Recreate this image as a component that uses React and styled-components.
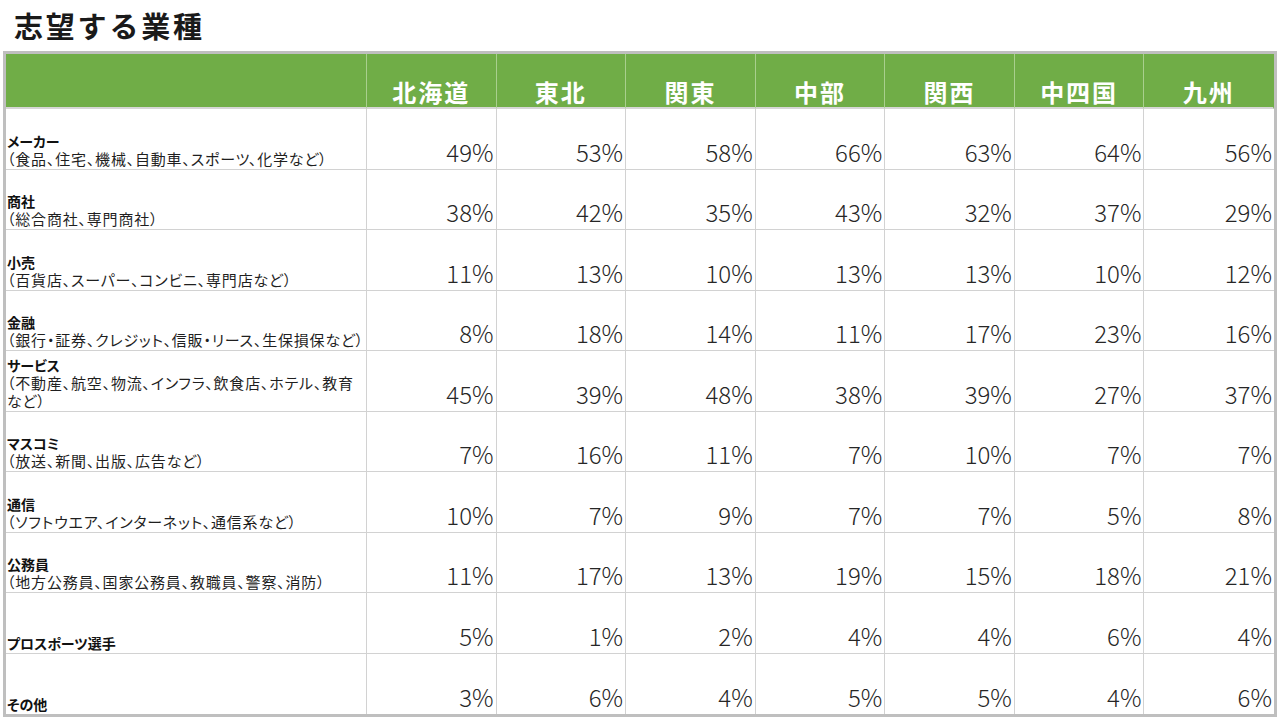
import React from "react";
import styled, { createGlobalStyle } from "styled-components";

const GlobalStyle = createGlobalStyle`
  html, body { margin: 0; padding: 0; background: #ffffff; }
  body {
    font-family: "Noto Sans CJK JP", "Noto Sans", sans-serif;
    color: #262626;
  }
`;

const Page = styled.div`
  width: 1280px;
  height: 720px;
  overflow: hidden;
  background: #ffffff;
`;

const Title = styled.h1`
  margin: 0;
  height: 51px;
  box-sizing: border-box;
  padding: 5px 0 0 14px;
  font-size: 29px;
  font-weight: 700;
  letter-spacing: 2.8px;
  line-height: 40px;
  color: #1a1a1a;
`;

const Table = styled.div`
  margin-left: 3px;
  width: 1274px;
  box-sizing: border-box;
  border: 3px solid #bfbfbf;
  display: grid;
  grid-template-columns: 361px repeat(7, 1fr);
  grid-template-rows: 55px repeat(10, 60.5px);
`;

const HeadCell = styled.div`
  background: #70ad47;
  color: #ffffff;
  font-weight: 700;
  font-size: 24px;
  letter-spacing: 2px;
  display: flex;
  align-items: flex-end;
  justify-content: center;
  padding-bottom: 3px;
  line-height: 24px;
  box-sizing: border-box;
  border-right: 1px solid ${(p) => (p.$last ? "transparent" : "#a9cf8e")};
  border-bottom: 2px solid #d6d6d6;
`;

const LabelCell = styled.div`
  display: flex;
  flex-direction: column;
  justify-content: flex-end;
  padding: 0 0 1px 1px;
  box-sizing: border-box;
  overflow: hidden;
  border-right: 1px solid #d2d2d2;
  border-bottom: ${(p) => (p.$last ? "none" : "1px solid #d2d2d2")};
`;

const Label = styled.div`
  font-size: 14px;
  font-weight: 700;
  line-height: 17px;
  color: #111111;
  white-space: nowrap;
  font-feature-settings: "palt";
`;

const Sub = styled.div`
  font-size: 15px;
  font-weight: 400;
  line-height: 18px;
  letter-spacing: 0.8px;
  color: #1f1f1f;
  white-space: nowrap;
  font-feature-settings: "palt";
`;

const ValueCell = styled.div`
  display: flex;
  align-items: flex-end;
  justify-content: flex-end;
  padding: 0 2px 5px 0;
  box-sizing: border-box;
  font-size: 24px;
  line-height: 24px;
  font-weight: 300;
  color: #262626;
  border-right: ${(p) => (p.$lastCol ? "none" : "1px solid #d2d2d2")};
  border-bottom: ${(p) => (p.$lastRow ? "none" : "1px solid #d2d2d2")};
`;

const regions = ["北海道", "東北", "関東", "中部", "関西", "中四国", "九州"];

const rows = [
  { label: "メーカー", sub: ["（食品、住宅、機械、自動車、スポーツ、化学など）"], values: [49, 53, 58, 66, 63, 64, 56] },
  { label: "商社", sub: ["（総合商社、専門商社）"], values: [38, 42, 35, 43, 32, 37, 29] },
  { label: "小売", sub: ["（百貨店、スーパー、コンビニ、専門店など）"], values: [11, 13, 10, 13, 13, 10, 12] },
  { label: "金融", sub: ["（銀行・証券、クレジット、信販・リース、生保損保など）"], values: [8, 18, 14, 11, 17, 23, 16] },
  { label: "サービス", sub: ["（不動産、航空、物流、インフラ、飲食店、ホテル、教育", "など）"], values: [45, 39, 48, 38, 39, 27, 37] },
  { label: "マスコミ", sub: ["（放送、新聞、出版、広告など）"], values: [7, 16, 11, 7, 10, 7, 7] },
  { label: "通信", sub: ["（ソフトウエア、インターネット、通信系など）"], values: [10, 7, 9, 7, 7, 5, 8] },
  { label: "公務員", sub: ["（地方公務員、国家公務員、教職員、警察、消防）"], values: [11, 17, 13, 19, 15, 18, 21] },
  { label: "プロスポーツ選手", sub: [], values: [5, 1, 2, 4, 4, 6, 4] },
  { label: "その他", sub: [], values: [3, 6, 4, 5, 5, 4, 6] },
];

export default function App() {
  return (
    <Page>
      <GlobalStyle />
      <Title>志望する業種</Title>
      <Table>
        <HeadCell />
        {regions.map((r, i) => (
          <HeadCell key={r} $last={i === regions.length - 1}>
            {r}
          </HeadCell>
        ))}
        {rows.map((row, ri) => {
          const lastRow = ri === rows.length - 1;
          return (
            <React.Fragment key={row.label}>
              <LabelCell $last={lastRow}>
                <Label>{row.label}</Label>
                {row.sub.map((s) => (
                  <Sub key={s}>{s}</Sub>
                ))}
              </LabelCell>
              {row.values.map((v, ci) => (
                <ValueCell key={ci} $lastCol={ci === row.values.length - 1} $lastRow={lastRow}>
                  {v}%
                </ValueCell>
              ))}
            </React.Fragment>
          );
        })}
      </Table>
    </Page>
  );
}
